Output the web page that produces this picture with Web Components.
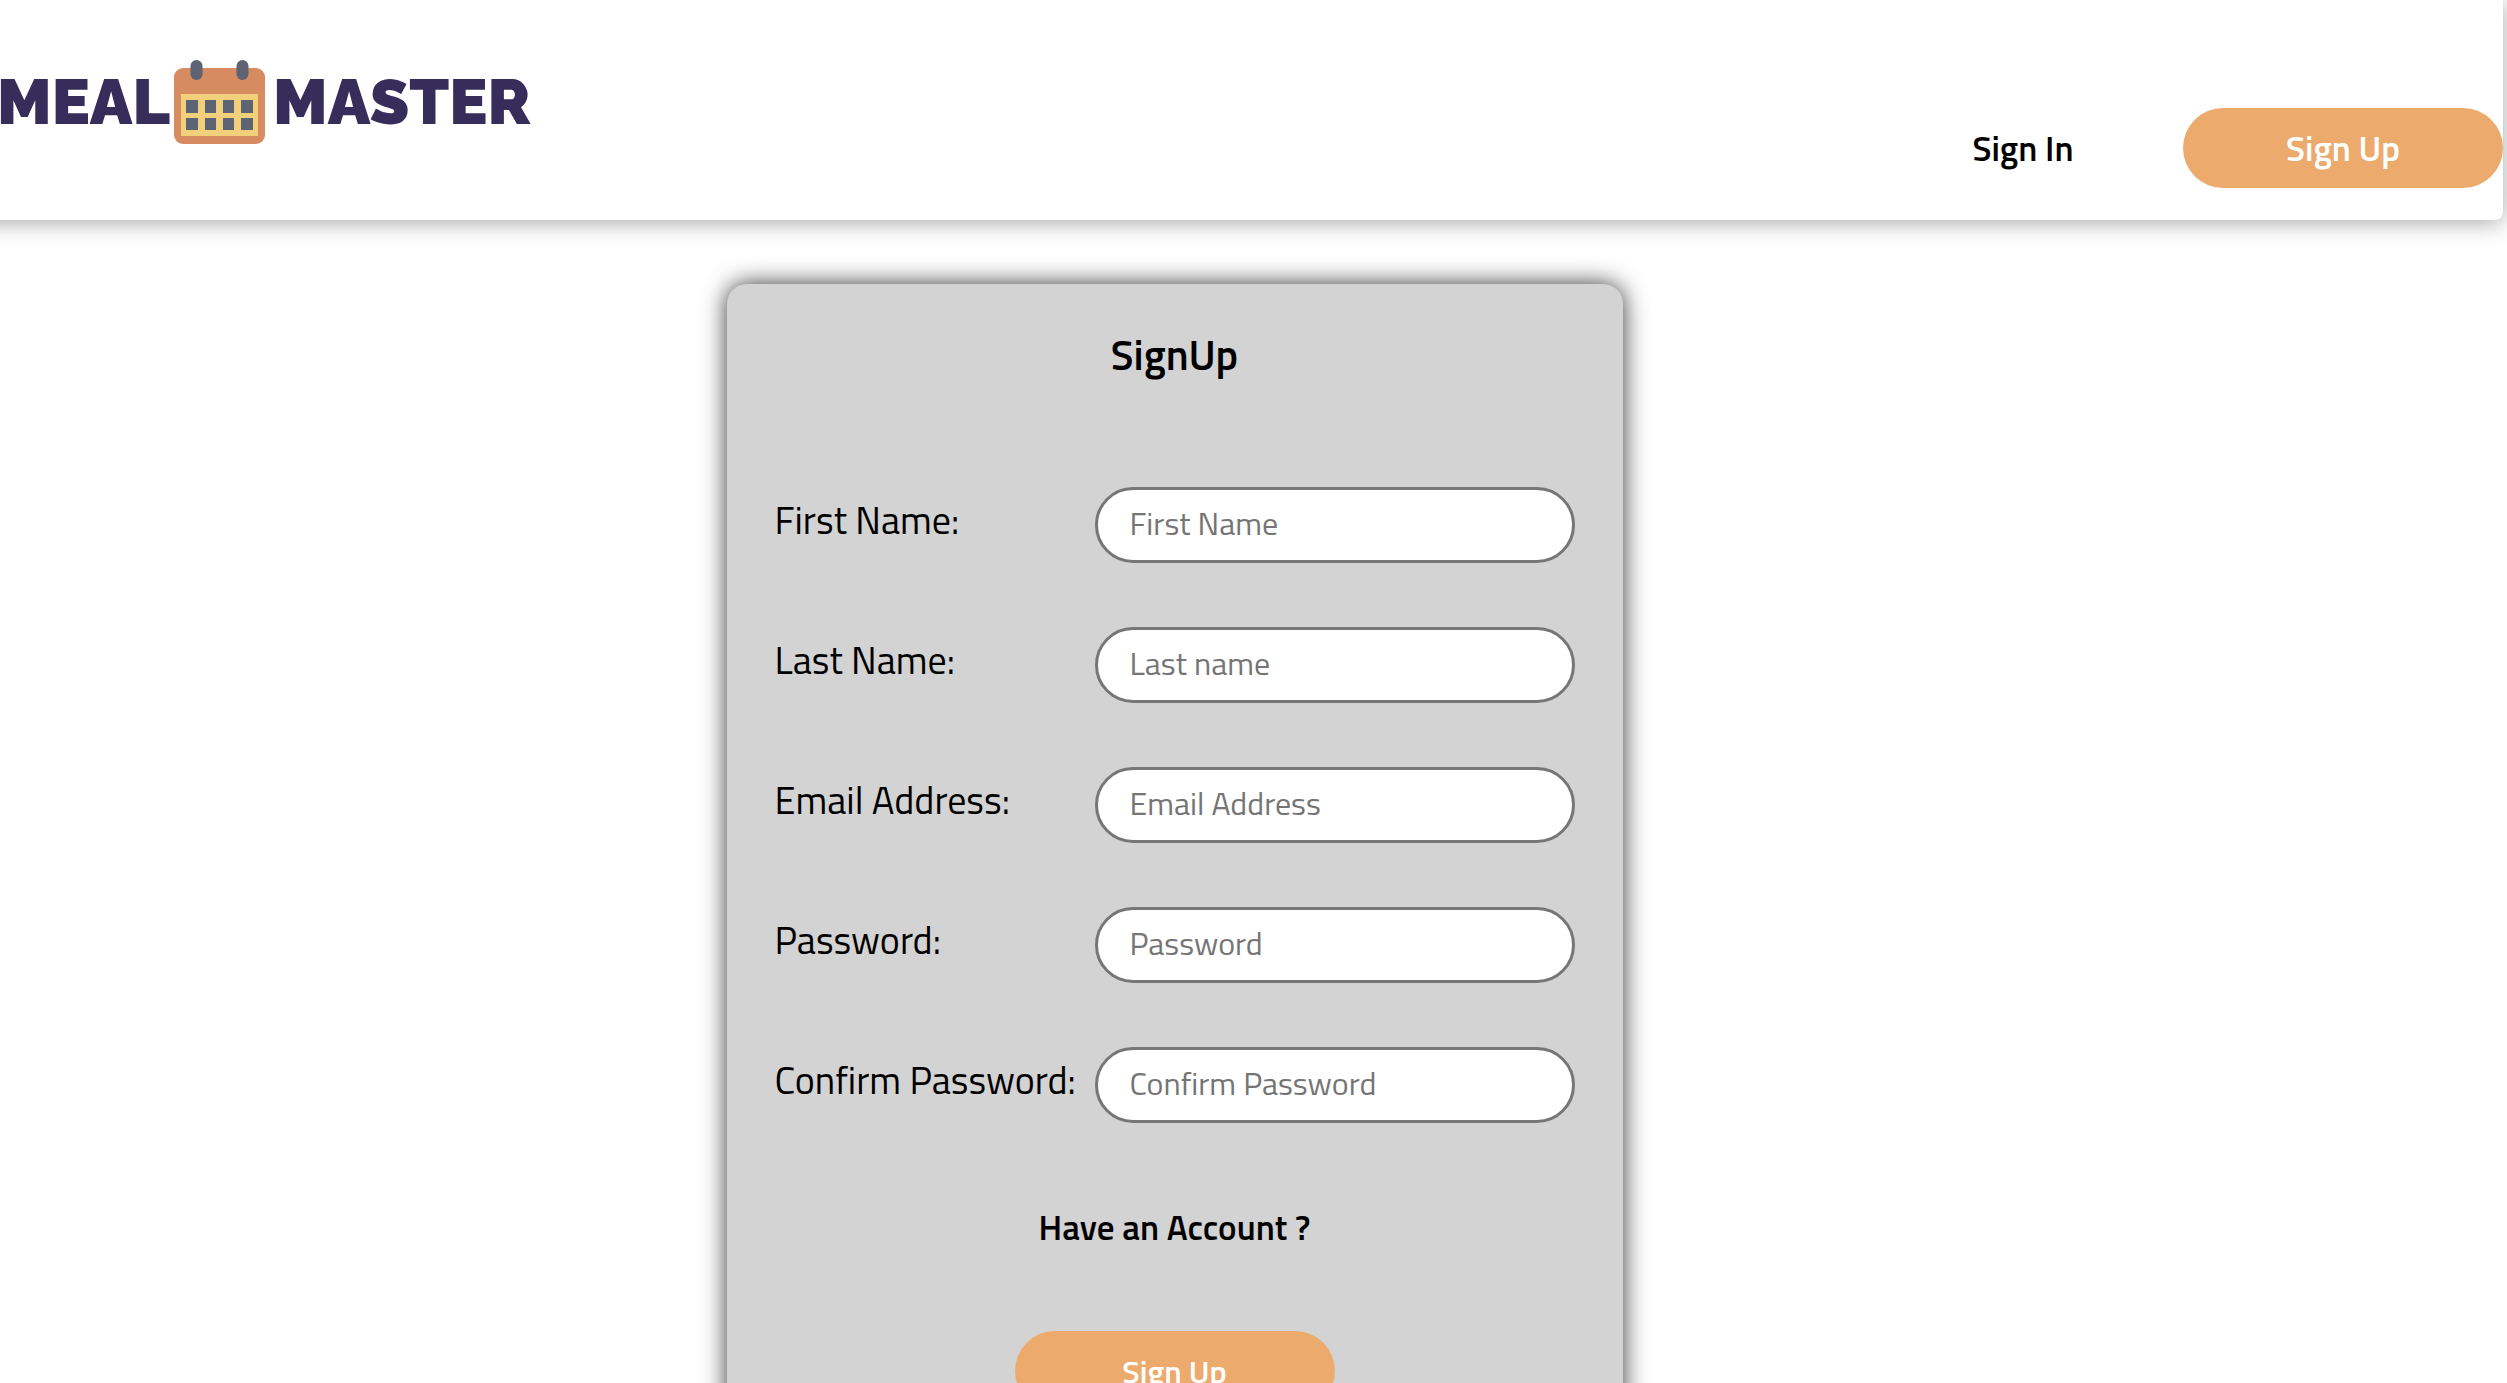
<!DOCTYPE html>
<html lang="en">
<head>
<meta charset="utf-8">
<meta name="viewport" content="width=device-width, initial-scale=1">
<title>Meal Master</title>
<style>
  html { scrollbar-width: none; }
  body { margin: 0; background: #fff; color: #000; font-family: "Titillium Web", Roboto, sans-serif; }
</style>
</head>
<body>
<meal-page>
  <site-header slot="header">
    <meal-logo slot="brand"></meal-logo>
    <pill-button slot="nav" variant="plain">Sign In</pill-button>
    <pill-button slot="nav">Sign Up</pill-button>
  </site-header>
  <signup-card heading="SignUp">
    <form-field label="First Name:" placeholder="First Name" type="text"></form-field>
    <form-field label="Last Name:" placeholder="Last name" type="text"></form-field>
    <form-field label="Email Address:" placeholder="Email Address" type="email"></form-field>
    <form-field label="Password:" placeholder="Password" type="password"></form-field>
    <form-field label="Confirm Password:" placeholder="Confirm Password" type="password"></form-field>
    <text-link slot="footer" href="#signin">Have an Account ?</text-link>
    <pill-button slot="footer" size="small">Sign Up</pill-button>
  </signup-card>
</meal-page>
<script>
function define(name, html, setup) {
  const template = document.createElement('template');
  template.innerHTML = html;
  customElements.define(name, class extends HTMLElement {
    constructor() {
      super();
      this.attachShadow({ mode: 'open' }).append(template.content.cloneNode(true));
    }
    connectedCallback() {
      if (setup) setup(this, this.shadowRoot);
    }
  });
}

define('meal-page', `
  <style>
    :host { display: block; overflow-x: clip; }
    main { display: flex; justify-content: center; padding: 64px 158px 64px 0; }
  </style>
  <slot name="header"></slot>
  <main><slot></slot></main>`);

define('site-header', `
  <style>
    :host { display: block; margin: 0 4px 0 -32px; }
    header { display: flex; justify-content: space-between; align-items: flex-end; box-sizing: border-box;
      height: 220px; padding: 0 0 32px 32px; background: #fff; border-radius: 0 0 8px 8px;
      box-shadow: 0 2px 24px rgba(0, 0, 0, .36); }
    .brand { align-self: flex-start; padding-top: 60px; }
    nav { display: flex; }
  </style>
  <header>
    <div class="brand"><slot name="brand"></slot></div>
    <nav><slot name="nav"></slot></nav>
  </header>`);

define('meal-logo', `
  <style>
    :host { display: flex; align-items: center; gap: 4px; color: #372d5b;
      font: 900 64px/84px Raleway, Lato, sans-serif; }
    .first { width: 170px; display: flex; justify-content: flex-end; }
    .second { padding-left: 3px; }
    svg { width: 92px; height: 84px; flex: none; }
  </style>
  <span class="first">MEAL</span>
  <svg viewBox="0 0 92 84" aria-hidden="true">
    <rect y="8" width="91" height="76" rx="9" fill="#d78b61"/>
    <rect x="7" y="34" width="77" height="42" fill="#f2cf7a"/>
    <g fill="#5e6373">
      <rect x="16.500" y="0" width="12" height="20" rx="6"/><rect x="62.500" y="0" width="12" height="20" rx="6"/>
      <path d="M12 40h12v13H12zM31 40h11v13H31zM49 40h11v13H49zM67 40h12v13H67zM12 58h12v12H12zM31 58h11v12H31zM49 58h11v12H49zM67 58h12v12H67z"/>
    </g>
  </svg>
  <span class="second">MASTER</span>`);

define('pill-button', `
  <style>
    :host { display: block; }
    button { display: block; width: 320px; height: 80px; padding: 0; border: 0; border-radius: 40px;
      background: #ecaa6d; color: #fff; font: 600 35px/40px "Titillium Web", Roboto, sans-serif; cursor: pointer; }
    :host([variant="plain"]) button { background: transparent; color: #000; }
    :host([size="small"]) button { font-size: 32px; }
  </style>
  <button type="button"><slot></slot></button>`);

define('text-link', `
  <style>
    :host { display: block; }
    a { color: #000; text-decoration: none; font-size: 35px; line-height: 40px; font-weight: 600; }
  </style>
  <a><slot></slot></a>`, (host, root) => {
  root.querySelector('a').href = host.getAttribute('href');
});

define('signup-card', `
  <style>
    :host { display: block; }
    form { display: flex; flex-direction: column; width: 800px; padding: 48px; background: #d3d3d3;
      border-radius: 20px; box-shadow: 0 0 24px rgba(0, 0, 0, .8); }
    h1 { margin: 0 0 111px; font-size: 42px; line-height: 44px; font-weight: 600; text-align: center; }
    .fields { display: grid; gap: 64px; }
    .footer { display: flex; flex-direction: column; align-items: center; gap: 84px; padding-top: 84px; }
  </style>
  <form>
    <h1></h1>
    <div class="fields"><slot></slot></div>
    <div class="footer"><slot name="footer"></slot></div>
  </form>`, (host, root) => {
  root.querySelector('h1').textContent = host.getAttribute('heading');
});

define('form-field', `
  <style>
    :host { display: flex; justify-content: space-between; align-items: center; }
    label { font-size: 38px; line-height: 48px; font-weight: 400; padding-bottom: 10px; }
    input { box-sizing: border-box; width: 480px; height: 76px; padding: 0 32px 4px; border: 3px solid #767676;
      border-radius: 38px; background: #fff; color: #000; font: 400 32px/40px "Titillium Web", Roboto, sans-serif; }
    input::placeholder { color: #757575; opacity: 1; }
  </style>
  <label for="control"></label>
  <input id="control">`, (host, root) => {
  root.querySelector('label').textContent = host.getAttribute('label');
  const input = root.querySelector('input');
  input.type = host.getAttribute('type');
  input.placeholder = host.getAttribute('placeholder');
});
</script>
</body>
</html>
